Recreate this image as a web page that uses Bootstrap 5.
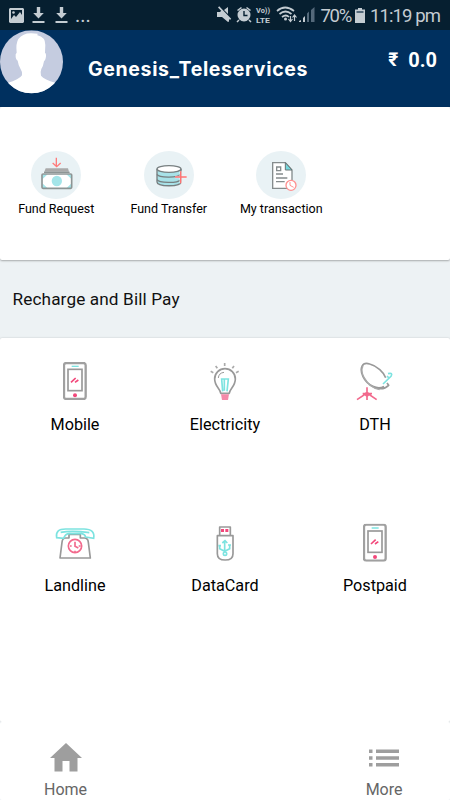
<!DOCTYPE html>
<html lang="en">
<head>
<meta charset="utf-8">
<meta name="viewport" content="width=device-width, initial-scale=1">
<title>Genesis_Teleservices</title>
<link href="https://cdn.jsdelivr.net/npm/bootstrap@5.3.0/dist/css/bootstrap.min.css" rel="stylesheet">
<style>
body{font-family:Roboto,"Liberation Sans",sans-serif;color:#111;background:#edf2f4;line-height:1.2}
svg{display:block;flex:none}
.screen{height:800px;overflow:hidden}
.status-bar{height:30px;background:#061f30;color:#c4ccd2;font-size:18.5px}
.status-left{padding-left:9px}
.second-download{margin-left:-2px}
.dots{font-size:20px;line-height:20px;margin-left:-1px}
.status-right{padding-right:10px}
.clock{letter-spacing:-.9px;margin-left:5px;padding-top:2px}
.battery-pct{letter-spacing:-1.3px;margin-left:5px;margin-right:4px;padding-top:2px}
.app-header{height:76.5px;background:#00305f;color:#fff}
.app-title{font:700 19.5px/24px Inter,sans-serif;margin:27px 0 0 25px;letter-spacing:.65px}
.balance{font:700 20px/24px Roboto,sans-serif;margin:18px 13px 0 0;gap:10px}
.rupee{font-size:19px}
.panel{border:0;border-radius:2px;background:#fff}
.funds{height:153.5px;padding-top:44.5px;box-shadow:0 1px 2px rgba(0,0,0,.3)}
.fund-label{font-size:12.5px;line-height:16px;margin-top:2px;color:#000}
.section-title{height:78px;font-size:17.2px;letter-spacing:.12px;padding:1px 0 0 12.5px}
.services{height:384px;padding-top:23px;box-shadow:0 0 2px rgba(0,0,0,.2)}
.service{height:161px}
.service-label{font-size:16.2px;line-height:20px;margin-top:14px;color:#000}
.bottom-nav{height:78px;color:#666;font-size:16px;padding-top:20px;position:relative}
.nav-home{margin-left:44px}
.nav-more{margin-right:47.5px}
.nav-label{line-height:20px;margin-top:8px}
.outline{fill:none;stroke:#999;stroke-width:5;stroke-linejoin:round}
.teal{fill:none;stroke:#7de3e0;stroke-width:5}
.pink{fill:none;stroke:#f26a8d;stroke-width:5}
</style>
</head>
<body>
<svg width="0" height="0" class="position-absolute" aria-hidden="true">
<symbol id="phone" viewBox="70 36 72 114">
<rect x="73" y="39" width="65" height="108" rx="7" fill="#fff" stroke="#a0a0a0" stroke-width="7"/>
<rect x="85" y="58" width="42" height="64" fill="#fff" stroke="#999" stroke-width="5"/>
<path d="M96 49h21" stroke="#7de3e0" stroke-width="4"/>
<path d="M94 97l14-13M106 97l10-7" stroke="#f2487b" stroke-width="5"/>
<circle cx="106" cy="136" r="6" fill="#f2487b"/>
</symbol>
<symbol id="download" viewBox="0 0 13 17"><path d="M4.800 0h3.400v6h3.600L6.500 11.500 1.200 6h3.600zM.5 14h12v2H.5z" fill="#c4ccd2"/></symbol>
</svg>
<main class="screen d-flex flex-column">
<div class="status-bar d-flex justify-content-between align-items-center">
<div class="status-left d-flex align-items-center gap-2">
<svg width="15" height="15" viewBox="0 0 15 15"><path fill="#c4ccd2" fill-rule="evenodd" d="M1 0h13l1 1v13l-1 1H1l-1-1V1zM2 2v9l3-4 2 2 4-5 2 3V2z"/><circle cx="4.500" cy="4.500" r="1.300" fill="#c4ccd2"/></svg>
<svg width="13" height="17" class="me-1"><use href="#download"/></svg>
<svg width="13" height="17" class="second-download"><use href="#download"/></svg>
<span class="dots">...</span>
</div>
<div class="status-right d-flex align-items-center">
<svg width="98" height="18" viewBox="0 0 98 18" fill="#c4ccd2">
<path d="M0 6h3l2-2 7 8v3.500l-1 .5-6-5H0zM7 4l4-3v7zM1 1.500L2.200.3l12 12.500-1.200 1.200z"/>
<path d="M20 4l4-3 1 1-4 3zM34 4l-4-3-1 1 4 3z"/><circle cx="27" cy="9" r="6.500"/><path d="M27 5v4.500h3.500" fill="none" stroke="#061f30" stroke-width="1.400"/><path d="M22 14l-2 2M32 14l2 2" stroke="#c4ccd2" stroke-width="1.500"/>
<text x="39" y="7" font-size="7" font-weight="700" textLength="14" lengthAdjust="spacingAndGlyphs">Vo))</text><text x="39" y="16.500" font-size="7.800" font-weight="700" textLength="14" lengthAdjust="spacingAndGlyphs">LTE</text>
<g fill="none" stroke="#c4ccd2" stroke-width="1.700"><path d="M60 5q8-7 17 0M62.500 8q6-5 12 0M65 11q4-3 7 0"/></g><circle cx="68.500" cy="13" r="1.500"/><path d="M73.500 10v5M71.500 13l2 2.500 2-2.500M77.500 15v-5M75.500 11.500l2-2.500 2 2.500" fill="none" stroke="#c4ccd2" stroke-width="1.200"/>
<path d="M82 16v-1l2-1v2zM86 16v-4l2-2v6z"/><path d="M90 16V7.500l2-2V16zM94 16V4l3.500-3v15z" fill="#54697a"/>
</svg>
<span class="battery-pct">70%</span>
<svg width="10" height="15" viewBox="0 0 10 15"><path d="M3 0h4v1.500h3V15H0V1.500h3z" fill="#c4ccd2"/><path d="M1.500 3h7v2h-7z" fill="#54697a"/></svg>
<span class="clock">11:19 pm</span>
</div>
</div>
<header class="app-header d-flex align-items-start">
<svg width="63" height="64" viewBox="0 90 189 190">
<clipPath id="avatar"><circle cx="94.500" cy="184.500" r="94.500"/></clipPath>
<g clip-path="url(#avatar)"><path d="M0 90h189v190H0z" fill="#c5cce0"/><path d="M22 248Q58 238 66 225Q68 215 62 207Q55 195 53 181Q46 178 47 162L50 157Q47 129 55 116Q70 98 94 99L113 100 112 105Q136 110 136 134L135 157Q140 161 137 174Q136 180 132 183Q130 197 124 206Q120 216 123 226Q133 238 166 247L180 280H8z" fill="#fff"/></g>
</svg>
<h1 class="app-title">Genesis_Teleservices</h1>
<div class="balance ms-auto d-flex"><span class="rupee">₹</span><span>0.0</span></div>
</header>
<section class="panel card funds">
<div class="row g-0 text-center">
<div class="col-3 d-flex flex-column align-items-center">
<svg width="50" height="48" viewBox="93 33 150 144"><ellipse cx="168" cy="105" rx="75" ry="72" fill="#e9f2f5"/><path d="M169 53v25M158 69l12 11 12-11" fill="none" stroke="#ff7b7b" stroke-width="4"/><path d="M137 85h67l3 10h-74z" fill="#aaa"/><path d="M132 96h77l7 7v42H125v-42z" fill="#fff"/><path d="M127 103h16l-16 15zM215 103h-16l16 15zM127 145h16l-16-15zM215 145h-16l16-15z" fill="#a4e5e9"/><circle cx="170.500" cy="123" r="15.500" fill="#a4e5e9"/><rect x="126" y="102" width="89" height="43" rx="3" fill="none" stroke="#8d9595" stroke-width="5"/><path d="M132 97h77" stroke="#8d9595" stroke-width="4"/></svg>
<span class="fund-label">Fund Request</span></div>
<div class="col-3 d-flex flex-column align-items-center">
<svg width="50" height="48" viewBox="71 33 150 144"><ellipse cx="146" cy="105" rx="75" ry="72" fill="#e9f2f5"/><path d="M110 87v39c0 15 72 15 72 0V87" fill="#a8e2e8" stroke="#777f80" stroke-width="4"/><path d="M110 103c5 10 60 12 72 0M110 119c5 10 60 12 72 0" fill="none" stroke="#777f80" stroke-width="4"/><ellipse cx="146" cy="87" rx="36" ry="10" fill="#fff" stroke="#777f80" stroke-width="4"/><path d="M181 94v36M164 111h35" stroke="#fff" stroke-width="8" opacity=".6"/><path d="M181 94v36M164 111h35" stroke="#ff7373" stroke-width="4"/></svg>
<span class="fund-label">Fund Transfer</span></div>
<div class="col-3 d-flex flex-column align-items-center">
<svg width="50" height="48" viewBox="79 33 150 144"><ellipse cx="154" cy="105" rx="75" ry="72" fill="#e9f2f5"/><path d="M129 68h38l20 22v55h-58z" fill="#fff" stroke="#858c8d" stroke-width="4"/><path d="M167 68v22h20z" fill="#75d7dc" stroke="#697475" stroke-width="3"/><path d="M141 81h12v11h-12zM139 102h21M139 114h34M139 125h26" fill="none" stroke="#858c8d" stroke-width="4"/><circle cx="184" cy="136" r="15" fill="#fff" stroke="#ff9090" stroke-width="4"/><path d="M181 126v10l11 6" fill="none" stroke="#ff9090" stroke-width="3"/></svg>
<span class="fund-label">My transaction</span></div>
</div>
</section>
<h2 class="section-title m-0 d-flex align-items-center fw-normal">Recharge and Bill Pay</h2>
<section class="panel card services">
<div class="row g-0 text-center">
<div class="col-4 service d-flex flex-column align-items-center"><svg width="50" height="40" viewBox="31 33 150 120"><use href="#phone" x="70" y="36" width="72" height="114"/></svg><span class="service-label">Mobile</span></div>
<div class="col-4 service d-flex flex-column align-items-center">
<svg width="50" height="40" viewBox="46 33 150 120"><path class="outline" d="M108 130c0-13-18-20-18-43a31 31 0 0 1 62 0c0 23-18 30-18 43z"/><path d="M101 84q1-15 17-17" fill="none" stroke="#999" stroke-width="3"/><path class="teal" d="M114 124l-3-37h20l-4 37M119 88v34"/><path d="M109 133h24l-3 17h-18z" fill="#f58aa9"/><path d="M120 39v9M93 48l5 7M148 48l-5 7M78 64l8 4M162 64l-8 4" stroke="#aaa" stroke-width="5"/></svg><span class="service-label">Electricity</span></div>
<div class="col-4 service d-flex flex-column align-items-center">
<svg width="50" height="40" viewBox="46 33 150 120"><path d="M148 109C130 121 98 107 85 80C73 54 83 34 105 42C127 47 148 68 153 83M157 99l5 7q-22 22-59-3" class="outline"/><path d="M85 48q-8 15 3 34 17 31 47 37" fill="none" stroke="#aaa" stroke-width="4"/><path class="teal" d="M145 102l24-23q7-12-9-8M157 78l8 8"/><path class="pink" d="M97 112v38M67 149l30-20 29 20M84 131h28"/><circle cx="97" cy="133" r="7" fill="#f26a8d"/></svg><span class="service-label">DTH</span></div>
<div class="col-4 service d-flex flex-column align-items-center">
<svg width="50" height="40" viewBox="45 18 150 120"><path class="outline" d="M91 66h11V55h34v11h12q11 0 12 13l6 47H75l6-47q1-12 10-13M78 126h89"/><path class="teal" d="M65 65Q60 39 92 39h55q34 0 29 28l-24-4q-3-9-12-10h-37q-12 0-17 14zM77 49q35-6 86 1"/><circle class="pink" cx="120" cy="90" r="20"/><path class="pink" d="M120 77v14l10 5M105 90h5M131 90h6M120 104v5"/></svg><span class="service-label">Landline</span></div>
<div class="col-4 service d-flex flex-column align-items-center">
<svg width="50" height="40" viewBox="46 18 150 120"><path class="outline" d="M105 58V33h32v25M98 59h47v54q0 19-23.500 19T98 113z"/><path d="M109 39h9v9h-9zM122 39h9v9h-9z" fill="#f2487b"/><path class="teal" d="M120 78v31M105 87v11l15 8 15-8V86M113 81l8-7 7 7M101 89h8M130 87h9"/><circle class="teal" cx="121" cy="113" r="5"/></svg><span class="service-label">DataCard</span></div>
<div class="col-4 service d-flex flex-column align-items-center"><svg width="50" height="40" viewBox="46 18 150 120"><use href="#phone" x="85" y="23" width="72" height="114"/></svg><span class="service-label">Postpaid</span></div>
</div>
</section>
<nav class="panel bottom-nav d-flex justify-content-between">
<div class="nav-home d-flex flex-column align-items-center"><svg width="34" height="30" viewBox="0 0 34 30"><path d="M17 1L1 16h4.500v13.500h8V19h7v10.500h8V16H33z" fill="#9e9e9e"/></svg><span class="nav-label">Home</span></div>
<div class="nav-more d-flex flex-column align-items-center"><svg width="30" height="30" viewBox="0 0 30 30"><path d="M0 7.500h3.500V11H0zM7 7.500h23V11H7zM0 14.200h3.500v3.500H0zM7 14.200h23v3.500H7zM0 21h3.500v3.500H0zM7 21h23v3.500H7z" fill="#9e9e9e"/></svg><span class="nav-label">More</span></div>
</nav>
</main>
<script src="https://cdn.jsdelivr.net/npm/bootstrap@5.3.0/dist/js/bootstrap.bundle.min.js"></script>
</body>
</html>
